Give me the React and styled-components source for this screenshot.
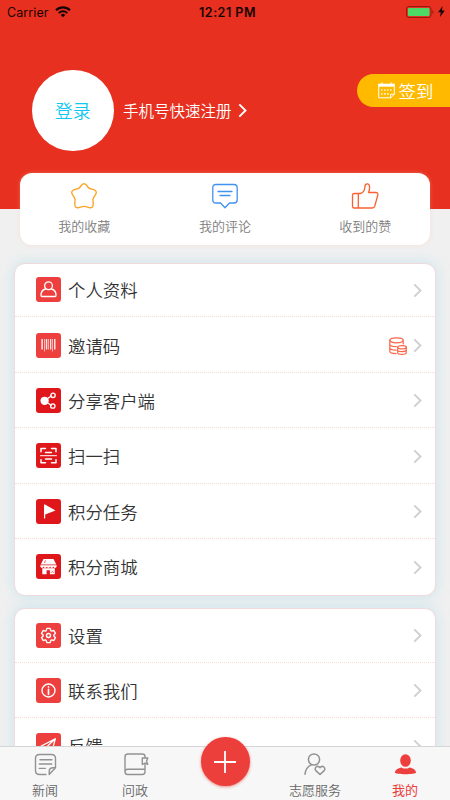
import styled, { createGlobalStyle } from "styled-components";

const GlobalStyle = createGlobalStyle`
  * {
    box-sizing: border-box;
  }

  body {
    margin: 0;
    font-family: "Noto Sans CJK SC", "Noto Sans", sans-serif;
    font-weight: 350;
  }

  svg {
    display: block;
    flex-shrink: 0;
    overflow: visible;
  }
`;

const Screen = styled.div`
  display: flex;
  flex-direction: column;
  width: 450px;
  height: 800px;
  overflow: hidden;
  background-color: #f0f0f0;
`;

const Content = styled.main`
  flex: 1;
  min-height: 0;
  overflow: hidden;
`;

const Header = styled.header`
  height: 209px;
  background-color: #e7301f;
`;

const StatusBar = styled.div`
  display: grid;
  grid-template-columns: 1fr auto 1fr;
  align-items: center;
  height: 24px;
  padding: 0 5px 0 7px;
  font-family: Inter, "Liberation Sans", sans-serif;
  font-size: 12.5px;
  font-weight: 400;
  letter-spacing: 0.1px;
  color: #160403;
`;

const Carrier = styled.div`
  display: flex;
  align-items: center;
  gap: 6px;
`;

const Time = styled.div`
  padding-left: 3px;
  font-weight: 600;
  letter-spacing: 0.5px;
`;

const Power = styled.div`
  display: flex;
  align-items: center;
  justify-content: flex-end;
  gap: 4px;
  padding-bottom: 1px;
`;

const Profile = styled.div`
  display: flex;
  align-items: flex-start;
  padding: 45.5px 0 0 32px;
`;

const Avatar = styled.button`
  width: 81.5px;
  height: 81.5px;
  padding: 0;
  border: none;
  border-radius: 50%;
  background-color: #fff;
  font: inherit;
  font-size: 18px;
  color: #12c8f0;
`;

const Register = styled.div`
  display: flex;
  align-items: center;
  gap: 6px;
  height: 81px;
  margin-left: 9.5px;
  font-size: 15.5px;
  line-height: 22px;
  color: #fff;
`;

const SignIn = styled.button`
  display: flex;
  align-items: center;
  gap: 3.5px;
  width: 93px;
  height: 33px;
  margin: 4.5px 0 0 auto;
  padding: 0 0 1px 21px;
  border: none;
  border-radius: 17px 0 0 17px;
  background-color: #ffba00;
  font: inherit;
  font-size: 17.4px;
  color: #fff;
`;

const QuickCard = styled.section`
  position: relative;
  display: grid;
  grid-template-columns: repeat(3, 1fr);
  width: 410px;
  height: 72px;
  margin: -36px auto 0;
  border-radius: 12px;
  background-color: #fff;
  box-shadow: 0 0 4px rgba(255, 190, 170, 0.35);
`;

const QuickItem = styled.div`
  display: flex;
  flex-direction: column;
  align-items: center;
  gap: 7px;
  padding-top: 10px;
  font-size: 13px;
  line-height: 20px;
  color: #7d7d7d;

  &:first-child {
    margin-right: 8px;
  }

  &:last-child {
    margin-left: 7px;
  }
`;

const Card = styled.section`
  width: 422px;
  margin: ${(props) => props.$top}px auto 0;
  padding-bottom: 1px;
  border: 1px solid #f3d9dc;
  border-radius: 11px;
  background-color: #fff;
  box-shadow: 0 0 13px rgba(165, 220, 235, 0.55);
`;

const Row = styled.div`
  display: flex;
  align-items: center;
  height: 55.4px;
  padding: 1px 13.5px 0 21px;
  border-bottom: 1px dotted #fbd9d4;

  &:first-child {
    height: 53.4px;
    padding-top: 0;
    padding-bottom: 1px;
  }

  &:last-child {
    border-bottom-color: transparent;
  }
`;

const Badge = styled.div`
  display: flex;
  align-items: center;
  justify-content: center;
  width: 25px;
  height: 25px;
  border-radius: 3px;
  background-color: ${(props) => (props.$dark ? "#df171a" : "#ed403e")};
`;

const Label = styled.div`
  flex: 1;
  margin-left: 7px;
  padding-top: 1px;
  font-size: 17.4px;
  line-height: 26px;
  color: #333;
`;

const RowEnd = styled.div`
  display: flex;
  align-items: center;
  gap: 6px;
  padding-top: 1px;
`;

const TabBar = styled.nav`
  position: relative;
  display: grid;
  grid-template-columns: repeat(5, 90px);
  height: 54px;
  border-top: 1px solid #d6d6d6;
  background-color: #f7f7f7;
`;

const Tab = styled.div`
  display: flex;
  flex-direction: column;
  align-items: center;
  gap: 3.5px;
  padding-top: 6px;
  font-size: 13px;
  font-weight: ${(props) => (props.$active ? 400 : 350)};
  line-height: 20px;
  color: ${(props) => (props.$active ? "#ea3d3a" : "#666")};
`;

const AddButton = styled.button`
  display: flex;
  align-items: center;
  justify-content: center;
  width: 49px;
  height: 49px;
  margin: -10px auto 0;
  padding: 0;
  border: none;
  border-radius: 50%;
  background-color: #ec3f3c;
  box-shadow: 0 1px 3px rgba(220, 60, 50, 0.55);
`;

function Icon({ size = 26, color = "#fff", width = 1.3, children }) {
  return (
    <svg
      width={size}
      height={size}
      viewBox={`0 0 ${size} ${size}`}
      fill="none"
      stroke={color}
      strokeWidth={width}
      strokeLinecap="round"
      strokeLinejoin="round"
    >
      {children}
    </svg>
  );
}

function Chevron({ color = "#cfcfd2" }) {
  return (
    <svg width="9" height="15" viewBox="0 0 9 15" fill="none" stroke={color}>
      <path d="M1.3 1.3 7.5 7.5 1.3 13.7" strokeWidth="1.9" />
    </svg>
  );
}

function WifiIcon() {
  return (
    <svg width="16" height="12" viewBox="0 0 16 12" fill="none" stroke="#160403">
      <path d="M1 4.2a10 10 0 0 1 14 0" strokeWidth="2.2" />
      <path d="M3.7 7.1a6.2 6.2 0 0 1 8.6 0" strokeWidth="2" />
      <path d="M8 11.2 5.7 8.9a3.3 3.3 0 0 1 4.6 0Z" fill="#160403" stroke="none" />
    </svg>
  );
}

function BatteryIcon() {
  return (
    <svg width="28" height="12" viewBox="0 0 28 12">
      <rect x=".5" y=".5" width="24.5" height="11" rx="2.5" fill="none" stroke="#8f1d13" />
      <rect x="2" y="2" width="21.5" height="8" rx="1" fill="#4cd964" />
      <path d="M26.3 4.2c1.6.5 1.6 3.1 0 3.6Z" fill="#8f1d13" />
    </svg>
  );
}

function BoltIcon() {
  return (
    <svg width="7" height="11" viewBox="0 0 7 11" fill="#160403">
      <path d="M4.6 0 .2 6.2h2.6L2 11l4.8-6.5H4L4.6 0Z" />
    </svg>
  );
}

function CalendarIcon() {
  return (
    <Icon size={17} width={1}>
      <path d="M.7 2.2v13.6h12l3.6-3.6v-10M12.6 15.8v-3.5h3.7" />
      <path d="M.7 1.7h15.6v3H.7Z" fill="#fff" stroke="none" />
      <path d="M4 .7v2.2M13 .7v2.2" />
      <path
        d="M3.2 8h1.3M6.2 8h1.3M9.2 8h1.3M12.2 8h1.3M3.2 11.8h1.3M6.2 11.8h1.3M9.2 11.8h1.3"
        strokeWidth="1.7"
        strokeLinecap="butt"
      />
    </Icon>
  );
}

function StarIcon() {
  return (
    <Icon color="#f9a62b" width={1.4}>
      <path d="M10.4 2.3q2.600-3.200 5.200 0l1.700 2.200q.8 1 2.100 1.200l3.400.9q3.600 1.500 2 4.600l-2.200 3.500q-.7 1.100-.6 2.300l.2 4.300q-.3 4-3.800 3.400l-3.700-1.100q-1.700-.5-3.400 0l-3.700 1.100q-3.500.6-3.800-3.400l.2-4.300q.1-1.200-.6-2.300l-2.200-3.500q-1.600-3.100 2-4.600l3.400-.9q1.300-.2 2.100-1.200Z" />
    </Icon>
  );
}

function CommentIcon() {
  return (
    <Icon color="#4292f2">
      <path d="M4 1.5h18q3.2 0 3.2 3.2V17q0 3-3.2 3h-4.5L13 24.8 8.5 20H4q-3.2 0-3.2-3V4.7Q.8 1.5 4 1.5ZM6 8.5h14M8 12.5h10" />
    </Icon>
  );
}

function LikeIcon() {
  return (
    <Icon color="#fb6032">
      <path d="M2.2 10.5h6c3-.8 4.500-3.500 4.700-6.200 0-2.600.7-3.500 2.200-3.500 1.900 0 2.500 1.800 2.500 3.700 0 2-.6 3.600-1 5h7.200c1.600 0 2.300 1 2 2.500L22.800 23q-.7 2-2.700 2H2.200Q.5 25 .5 23V12.300q0-1.800 1.700-1.800ZM6.300 10.600V25" />
    </Icon>
  );
}

function CoinsIcon() {
  return (
    <Icon size={18} color="#fa6549" width={1.2}>
      <ellipse cx="7.5" cy="3.3" rx="6.7" ry="2.5" />
      <path d="M.8 3.3v11c0 1.5 3 2.3 6.2 2.4M.8 7c0 1.6 3 2.6 6.5 2.6M.8 10.7c0 1.6 3 2.4 6.2 2.5M14.2 3.3V7" />
      <ellipse cx="13" cy="10.2" rx="4.3" ry="1.6" />
      <path d="M8.7 10.2v5.6c0 2.2 8.6 2.2 8.6 0v-5.6M8.7 13c0 2.1 8.6 2.1 8.6 0" />
    </Icon>
  );
}

function PersonIcon() {
  return (
    <Icon size={17}>
      <circle cx="8.5" cy="4.8" r="3.9" />
      <path d="M5.6 8C2.7 8.6 1 11.5 1 14.5q0 1 1 1h13q1 0 1-1c0-3-1.7-5.9-4.6-6.5" />
    </Icon>
  );
}

function BarcodeIcon() {
  return (
    <svg width="15" height="14" viewBox="0 0 15 14" fill="#fff" opacity=".85">
      <path d="M.3 1h1.6v10.5H.3ZM3 1h.7v12.5H3ZM4.8 1h1.5v10.5H4.8ZM7.3 1h.7v10.5h-.7ZM9 1h1.3v10.5H9ZM11.2 1h.7v12.5h-.7ZM13 1h1.5v10.5H13Z" />
    </svg>
  );
}

function ShareIcon() {
  return (
    <Icon size={17}>
      <circle cx="4.6" cy="8.8" r="3.5" fill="#fff" />
      <path d="m7 7 4.2-3M7 10.5l4.2 2.8" />
      <circle cx="13" cy="3.3" r="2.2" />
      <circle cx="12.8" cy="14" r="2.2" />
    </Icon>
  );
}

function ScanIcon() {
  return (
    <Icon size={17} width={1.5}>
      <path d="M1 4.8V1.5h4.5M11.5 1.5H16v3.3M1 12.7v3h4.5M11.5 15.7H16v-3M5.5 5.5h6M5.5 12h6" />
      <path d="M.5 8.7h16" strokeWidth="1" />
    </Icon>
  );
}

function FlagIcon() {
  return (
    <svg width="17" height="17" viewBox="0 0 17 17" fill="#fff">
      <path d="M4 1.5V15.5h1.2v-4L15.5 7.5 5 1.5Z" />
    </svg>
  );
}

function ShopIcon() {
  return (
    <svg width="17" height="17" viewBox="0 0 17 17" fill="#fff">
      <path d="M3.5 1h10L16.3 6.5H.7Z" />
      <path d="M.3 7.2h16.4v.9c0 2.3-3 2.3-3.3.5-.3 1.8-3 1.8-3.3 0-.3 1.8-2.9 1.8-3.2 0-.3 1.8-3 1.8-3.3 0-.3 1.8-3.3 1.8-3.3-.5Z" />
      <path d="M2.3 10.3h12.5v6H9.9v-4H6.6v4H2.3Z" />
      <path d="m4.5 5 1-2.5M11 14.8l2-2M12.8 15l.8-.8" stroke="#df171a" strokeWidth=".7" />
    </svg>
  );
}

function GearIcon() {
  return (
    <Icon size={17} width={1.4}>
      <path d="M6.2 3.600 6.860 1.390h3.280L10.800 3.600l.8.480 2.240-.560 1.640 2.850-1.600 1.660v.94l1.600 1.660-1.640 2.850-2.240-.560-.8.480-.660 2.210H6.860L6.200 13.400l-.8-.480-2.240.560-1.640-2.850 1.600-1.660v-.94l-1.600-1.660 1.640-2.850 2.240.560Z" />
      <circle cx="8.5" cy="8.5" r="2" />
    </Icon>
  );
}

function InfoIcon() {
  return (
    <Icon size={17} width={1.4}>
      <circle cx="8.5" cy="8.5" r="6.5" />
      <path d="M8.5 7.4v4.9M8.5 4.9v.1" strokeWidth="1.7" />
    </Icon>
  );
}

function SendIcon() {
  return (
    <Icon size={17}>
      <path d="M15.3 1.8 1.2 9l4.3 2.1L15.3 1.8 11.8 15l-4-3M5.5 11.1V15" />
    </Icon>
  );
}

function NewsIcon() {
  return (
    <Icon size={23} color="#929292" width={1.4}>
      <path d="M12 21.5H5.5q-4 0-4-4v-12q0-4 4-4h12q4 0 4 4v9.3l-6.3 6.7v-3.3q0-3 3.2-3.4h3.1M6 6.800h12M5.300 11h12.500M5.300 15.400h6" />
    </Icon>
  );
}

function BookIcon() {
  return (
    <Icon size={23} color="#929292" width={1.4}>
      <path d="M21 11.5v7.3q0 2.7-2.7 2.7H3.7q-2.7 0-2.7-2.5 0-2.7 2.7-2.7H21M1 18.5V4q0-3 3-3h14.3Q21 1 21 3.5V5" />
      <path d="M18.300 5h5.500l-1.300 3.200 1.300 3.200-2.800-1.300-2.700 1.300Z" fill="#f7f7f7" />
    </Icon>
  );
}

function VolunteerIcon() {
  return (
    <Icon size={23} color="#929292" width={1.5}>
      <circle cx="10" cy="6.5" r="5.6" />
      <path d="M1 21.3c.3-4.3 2.3-7.5 6.1-9.4M16 21.5l-4.2-3.9c-2.2-2.7 1.7-5.9 4.2-3 2.5-2.9 6.4.3 4.2 3Z" />
    </Icon>
  );
}

function MineIcon() {
  return (
    <svg width="23" height="23" viewBox="0 0 23 23" fill="#ed3f3d">
      <ellipse cx="11.5" cy="7.5" rx="5.3" ry="6.3" />
      <path d="M1 19.5c0-2.7 3-4.5 6.5-5.1 2.5 1.6 5.5 1.6 8 0 3.5.6 6.5 2.4 6.5 5.1 0 2.3-21 2.3-21 0Z" />
    </svg>
  );
}

const shortcuts = [
  { name: "我的收藏", icon: <StarIcon /> },
  { name: "我的评论", icon: <CommentIcon /> },
  { name: "收到的赞", icon: <LikeIcon /> },
];

const mainMenu = [
  { name: "个人资料", icon: <PersonIcon /> },
  { name: "邀请码", icon: <BarcodeIcon />, extra: <CoinsIcon /> },
  { name: "分享客户端", icon: <ShareIcon />, dark: true },
  { name: "扫一扫", icon: <ScanIcon />, dark: true },
  { name: "积分任务", icon: <FlagIcon />, dark: true },
  { name: "积分商城", icon: <ShopIcon />, dark: true },
];

const moreMenu = [
  { name: "设置", icon: <GearIcon /> },
  { name: "联系我们", icon: <InfoIcon /> },
  { name: "反馈", icon: <SendIcon /> },
];

function Menu({ items, top }) {
  return (
    <Card $top={top}>
      {items.map((item) => (
        <Row key={item.name}>
          <Badge $dark={item.dark}>{item.icon}</Badge>
          <Label>{item.name}</Label>
          <RowEnd>
            {item.extra}
            <Chevron />
          </RowEnd>
        </Row>
      ))}
    </Card>
  );
}

function App() {
  return (
    <>
      <GlobalStyle />
      <Screen>
        <Content>
          <Header>
            <StatusBar>
              <Carrier>
                Carrier <WifiIcon />
              </Carrier>
              <Time>12:21 PM</Time>
              <Power>
                <BatteryIcon />
                <BoltIcon />
              </Power>
            </StatusBar>
            <Profile>
              <Avatar>登录</Avatar>
              <Register>
                手机号快速注册 <Chevron color="#fff" />
              </Register>
              <SignIn>
                <CalendarIcon /> 签到
              </SignIn>
            </Profile>
          </Header>

          <QuickCard>
            {shortcuts.map((item) => (
              <QuickItem key={item.name}>
                {item.icon}
                {item.name}
              </QuickItem>
            ))}
          </QuickCard>

          <Menu items={mainMenu} top={18} />
          <Menu items={moreMenu} top={12} />
        </Content>

        <TabBar>
          <Tab>
            <NewsIcon />
            新闻
          </Tab>
          <Tab>
            <BookIcon />
            问政
          </Tab>
          <AddButton>
            <Icon size={24} width={1.8}>
              <path d="M12 1v22M1 12h22" strokeLinecap="butt" />
            </Icon>
          </AddButton>
          <Tab>
            <VolunteerIcon />
            志愿服务
          </Tab>
          <Tab $active>
            <MineIcon />
            我的
          </Tab>
        </TabBar>
      </Screen>
    </>
  );
}

export default App;
